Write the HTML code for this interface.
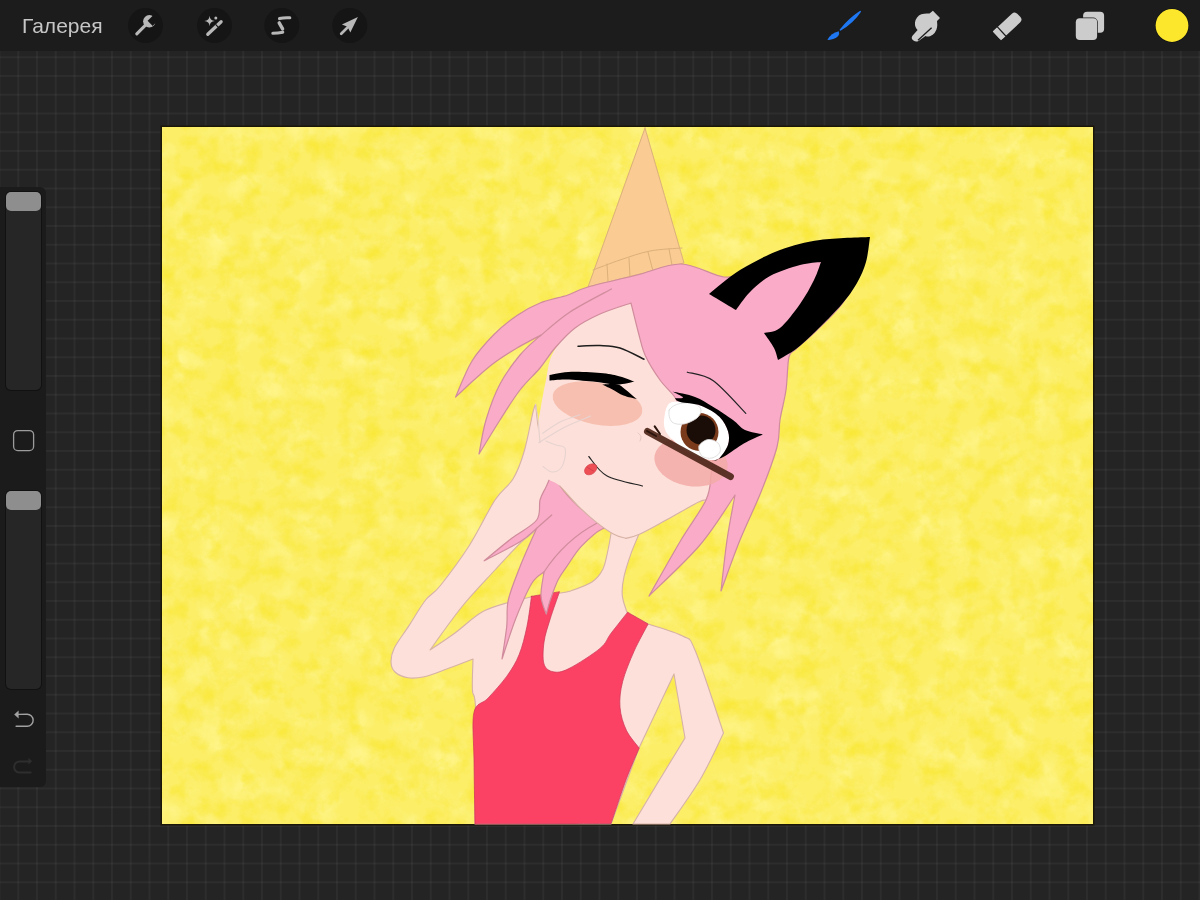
<!DOCTYPE html>
<html><head><meta charset="utf-8">
<style>
html,body{margin:0;padding:0;}
body{width:1200px;height:900px;overflow:hidden;position:relative;background:#242424;font-family:"Liberation Sans",sans-serif;}
#grid{position:absolute;left:0;top:0;width:1200px;height:900px;
background-color:#242424;
background-image:linear-gradient(to right, rgba(255,255,255,0.038) 1.5px, transparent 1.5px),linear-gradient(to bottom, rgba(255,255,255,0.038) 1.5px, transparent 1.5px);
background-size:18.75px 18.75px;background-position:-1.5px 0px;}
#topbar{position:absolute;left:0;top:0;width:1200px;height:51px;background:#1c1c1c;}
#gal{position:absolute;left:22px;top:14px;font-size:21px;color:#c6c6c6;transform:translateZ(0);}
.circ{position:absolute;top:8px;width:36px;height:36px;border-radius:50%;background:#151515;}
#side{position:absolute;left:0;top:187px;width:46px;height:600px;background:#1b1b1b;border-radius:0 6px 6px 0;}
.track{position:absolute;left:6px;width:35px;background:#262626;border-radius:5px;box-shadow:0 0 0 1px #111;}
.thumb{position:absolute;left:6px;width:35px;height:19px;background:#8e8e8e;border-radius:5px;}
svg{position:absolute;left:0;top:0;}
</style></head><body>
<div id="grid"></div>
<div id="topbar"></div>
<div id="gal">Галерея</div>
<div id="side"></div>
<div class="track" style="top:192px;height:198px"></div>
<div class="thumb" style="top:192px"></div>
<div class="track" style="top:491px;height:198px"></div>
<div class="thumb" style="top:491px"></div>
<svg width="1200" height="900" viewBox="0 0 1200 900">
<defs>
<filter id="tex" x="0" y="0" width="100%" height="100%" color-interpolation-filters="sRGB">
<feTurbulence type="fractalNoise" baseFrequency="0.05" numOctaves="5" seed="11" result="n"/>
<feColorMatrix in="n" type="matrix" values="0 0 0 0 0.975  0 0 0 0 0.905  0 0 0 0 0.2  1.9 0 0 0 -0.85" result="c"/>
<feComposite in="c" in2="SourceGraphic" operator="in"/>
</filter>
<filter id="tex2" x="0" y="0" width="100%" height="100%" color-interpolation-filters="sRGB">
<feTurbulence type="fractalNoise" baseFrequency="0.035" numOctaves="4" seed="23" result="n"/>
<feColorMatrix in="n" type="matrix" values="0 0 0 0 1  0 0 0 0 0.97  0 0 0 0 0.6  1.6 0 0 0 -0.72" result="c"/>
<feComposite in="c" in2="SourceGraphic" operator="in"/>
</filter>
</defs>
<rect x="160.5" y="125.5" width="934" height="700" fill="#1a1608"/>
<rect x="162" y="127" width="931" height="697" fill="#fcee66"/>
<rect x="162" y="127" width="931" height="697" fill="#fff" filter="url(#tex2)"/>
<rect x="162" y="127" width="931" height="697" fill="#fff" filter="url(#tex)"/>
<g stroke-linejoin="round" stroke-linecap="round">
<!-- cone -->
<path d="M645.0,128.0 C651.5,150.5 677.5,240.5 684.0,263.0 C668.0,267.0 604.0,283.0 588.0,287.0 C597.5,260.5 635.5,154.5 645.0,128.0 Z" fill="#facb93" stroke="#dcb07a" stroke-width="1"/>
<path d="M593.0,270.0 C597.5,268.3 610.5,263.2 620.0,260.0 C629.5,256.8 639.7,253.0 650.0,251.0 C660.3,249.0 676.7,248.5 682.0,248.0" fill="none" stroke="#dcb07a" stroke-width="1"/>
<path d="M607,264 L608,281 M629,258 L630,277 M648,252 L653,271 M669,249 L672,265" fill="none" stroke="#dcb07a" stroke-width="1"/>
<!-- body skin -->
<path d="M611.6,530.0 C611.0,533.3 609.5,543.4 608.0,550.0 C606.5,556.6 605.4,564.3 602.7,569.6 C600.0,574.9 597.3,578.5 592.0,582.0 C586.7,585.5 576.0,589.1 570.7,590.9 C565.4,592.7 561.8,592.6 560.0,593.0 C555.1,593.7 535.7,596.3 530.8,597.0 C527.3,597.8 518.1,599.5 510.0,602.0 C501.9,604.5 491.2,606.8 482.0,612.0 C472.8,617.2 463.7,626.7 455.0,633.0 C446.3,639.3 434.2,647.2 430.0,650.0 C435.3,642.8 450.9,620.3 461.7,607.0 C472.5,593.7 485.3,580.6 495.0,570.0 C504.7,559.4 513.0,550.2 520.0,543.3 C527.0,536.3 531.7,535.5 536.7,528.3 C541.7,521.1 547.5,508.4 550.0,500.0 C552.5,491.6 552.5,483.0 552.0,478.0 C551.5,473.0 549.0,476.2 547.0,470.0 C545.0,463.8 541.9,451.9 540.0,441.0 C538.1,430.1 536.3,410.5 535.6,404.4 C535.2,405.7 534.9,404.1 533.0,412.0 C531.1,419.9 527.3,440.8 524.0,452.0 C520.7,463.2 517.8,471.0 513.0,479.0 C508.2,487.0 502.3,488.8 495.0,500.0 C487.7,511.2 478.2,531.7 469.0,546.0 C459.8,560.3 447.2,577.0 440.0,586.0 C432.8,595.0 430.8,593.4 425.6,600.0 C420.4,606.6 414.2,617.6 409.0,625.6 C403.8,633.6 397.4,641.7 394.4,647.8 C391.4,653.9 390.9,658.0 391.0,662.0 C391.1,666.0 392.2,669.4 395.0,672.0 C397.8,674.6 403.1,677.0 408.0,677.8 C412.9,678.6 417.9,678.2 424.4,676.7 C430.8,675.2 438.6,672.0 446.7,669.0 C454.8,666.0 468.6,660.7 473.0,659.0 C472.9,664.2 472.0,681.3 472.4,690.0 C472.8,698.7 475.2,688.7 475.6,711.0 C476.0,733.3 475.1,805.2 475.0,824.0 C497.7,824.0 588.3,824.0 611.0,824.0 C615.7,811.3 634.3,760.7 639.0,748.0 C644.8,735.7 668.2,686.3 674.0,674.0 C675.8,684.7 683.2,727.3 685.0,738.0 C680.3,745.7 665.7,769.7 657.0,784.0 C648.3,798.3 637.0,817.3 633.0,824.0 C639.2,824.0 663.8,824.0 670.0,824.0 C675.1,816.5 691.6,794.2 700.5,779.0 C709.4,763.8 719.7,740.7 723.5,733.0 C718.8,719.3 702.2,667.2 695.4,651.0 C688.6,634.8 690.5,640.5 682.6,636.0 C674.7,631.5 653.8,626.0 648.0,624.0 C644.9,622.3 633.0,616.5 629.3,614.0 C625.6,611.5 627.0,612.0 625.8,608.7 C624.6,605.4 622.5,599.7 622.2,594.4 C621.9,589.1 622.5,583.5 624.0,576.7 C625.5,569.9 628.6,560.4 631.0,553.6 C633.4,546.8 636.7,539.7 638.2,535.8 C639.7,531.9 639.7,531.0 640.0,530.0 C635.3,530.0 616.3,530.0 611.6,530.0 Z" fill="#fde0d9" stroke="#d7b2a6" stroke-width="1.1"/>
<!-- red top -->
<path d="M531.5,596.3 C536.2,595.5 554.8,592.5 559.5,591.7 C558.0,596.2 552.8,610.5 550.2,618.9 C547.6,627.3 545.0,634.7 544.0,642.2 C543.0,649.7 542.5,659.1 544.0,664.0 C545.5,668.9 549.1,671.0 553.3,671.8 C557.4,672.6 561.1,672.5 568.9,668.6 C576.7,664.7 593.0,654.3 600.0,648.4 C607.0,642.5 606.5,639.2 611.1,633.2 C615.7,627.2 624.9,615.7 627.6,612.2 C631.0,614.2 644.7,622.0 648.1,624.0 C645.8,628.5 638.4,641.5 634.1,651.1 C629.9,660.7 625.0,672.3 622.6,681.7 C620.2,691.1 619.4,699.2 620.0,707.3 C620.6,715.4 623.2,723.5 626.4,730.3 C629.6,737.1 637.1,745.1 639.2,748.1 C637.1,753.2 631.1,766.2 626.4,778.8 C621.7,791.4 613.6,816.0 611.1,823.5 C588.4,823.6 497.7,823.9 475.0,824.0 C474.8,813.3 474.2,778.6 474.0,760.0 C473.8,741.4 471.7,722.5 474.0,712.2 C476.3,701.9 482.6,704.2 488.0,698.2 C493.4,692.2 501.5,683.6 506.7,676.4 C511.9,669.1 515.7,663.0 519.1,654.7 C522.5,646.4 524.8,636.4 526.9,626.7 C529.0,617.0 530.7,601.4 531.5,596.3 Z" fill="#fc4264" stroke="#cc3556" stroke-width="0.7"/>
<!-- back hair -->
<path d="M554.0,472.0 C551.7,472.2 548.3,482.3 546.0,487.0 C543.7,491.7 541.5,494.5 540.0,500.0 C538.5,505.5 541.4,513.6 536.7,520.0 C532.0,526.4 520.5,531.5 511.7,538.3 C502.9,545.1 488.8,557.0 484.2,560.8 C490.2,557.6 511.2,547.1 520.0,541.7 C528.8,536.3 533.9,530.5 536.7,528.3 C533.9,534.7 524.7,554.8 520.0,566.7 C515.3,578.7 510.5,590.0 508.3,600.0 C506.1,610.0 507.8,616.9 506.7,626.7 C505.6,636.5 502.8,653.6 502.0,659.0 C504.3,652.2 511.0,630.7 516.0,618.0 C521.0,605.3 527.3,590.7 532.0,583.0 C536.7,575.3 542.0,573.8 544.0,572.0 C543.5,576.0 540.6,589.0 541.0,596.0 C541.4,603.0 545.4,611.2 546.3,614.2 C546.9,611.9 548.2,605.9 550.2,600.2 C552.2,594.5 555.2,585.6 558.0,580.0 C560.8,574.4 562.8,572.3 566.7,566.7 C570.6,561.1 575.3,552.7 581.3,546.4 C587.3,540.1 597.2,531.1 602.7,528.7 C608.2,526.3 612.1,531.5 614.0,532.0 C611.7,530.3 606.0,526.3 600.0,522.0 C594.0,517.7 584.7,512.0 578.0,506.0 C571.3,500.0 564.0,491.7 560.0,486.0 C556.0,480.3 556.3,471.8 554.0,472.0 Z" fill="#f9abc8" stroke="#d08c9c" stroke-width="1.2"/>
<path d="M536.7,528.3 L551.7,515 M544,572 Q565,540 596.7,523.3" fill="none" stroke="#d08c9c" stroke-width="1.2"/>
<!-- face skin -->
<path d="M631.0,301.0 C642.5,304.2 676.8,298.5 700.0,320.0 C723.2,341.5 765.5,404.5 770.0,430.0 C774.5,455.5 737.3,461.3 727.0,473.0 C716.7,484.7 712.7,495.2 708.0,500.0 C703.3,504.8 705.6,498.7 698.7,502.0 C691.8,505.3 676.5,514.5 666.7,519.8 C656.9,525.1 646.8,530.9 640.0,534.0 C633.2,537.1 628.2,537.7 625.8,538.4 C623.7,537.7 618.3,536.8 613.3,534.0 C608.3,531.2 601.5,526.3 595.6,521.6 C589.7,516.9 583.7,511.5 577.8,505.6 C571.9,499.7 565.3,490.6 560.0,486.0 C554.7,481.4 549.8,481.0 546.0,478.0 C542.2,475.0 538.7,474.3 537.0,468.0 C535.3,461.7 535.3,450.3 536.0,440.0 C536.7,429.7 539.3,416.0 541.0,406.0 C542.7,396.0 544.2,388.5 546.0,380.0 C547.8,371.5 548.0,363.3 552.0,355.0 C556.0,346.7 562.0,337.2 570.0,330.0 C578.0,322.8 589.8,316.8 600.0,312.0 C610.2,307.2 625.8,302.8 631.0,301.0 Z" fill="#fde0d9" stroke="none"/>
<path d="M560.0,486.0 C563.0,489.3 571.9,499.7 577.8,505.6 C583.7,511.5 589.7,516.9 595.6,521.6 C601.5,526.3 608.3,531.2 613.3,534.0 C618.3,536.8 623.7,537.7 625.8,538.4" fill="none" stroke="#d7b2a6" stroke-width="1.1"/>
<path d="M625.8,538.4 C628.2,537.7 633.2,537.1 640.0,534.0 C646.8,530.9 656.9,525.1 666.7,519.8 C676.5,514.5 691.8,505.3 698.7,502.0 C705.6,498.7 706.5,500.3 708.0,500.0" fill="none" stroke="#d7b2a6" stroke-width="1.1"/>
<!-- main hair -->
<path d="M455.6,397.0 C458.3,391.0 465.6,371.4 472.0,361.0 C478.4,350.6 486.5,342.1 494.0,334.5 C501.5,326.9 509.3,320.8 517.0,315.5 C524.7,310.2 531.5,306.4 540.0,303.0 C548.5,299.6 560.0,297.7 568.0,295.0 C576.0,292.3 576.5,290.3 588.0,287.0 C599.5,283.7 621.5,278.8 637.0,275.0 C652.5,271.2 666.5,263.7 681.0,264.0 C695.5,264.3 713.3,276.0 724.0,277.0 C734.7,278.0 734.0,274.5 745.0,270.0 C756.0,265.5 774.2,254.8 790.0,250.0 C805.8,245.2 827.3,242.7 840.0,241.0 C852.7,239.3 861.7,240.2 866.0,240.0 C865.0,245.3 864.0,261.3 860.0,272.0 C856.0,282.7 849.3,294.2 842.0,304.0 C834.7,313.8 823.7,323.5 816.0,331.0 C808.3,338.5 800.5,344.7 796.0,349.0 C791.5,353.3 790.7,350.2 789.0,357.0 C787.3,363.8 787.5,379.5 786.0,390.0 C784.5,400.5 781.5,410.5 780.0,420.0 C778.5,429.5 780.2,435.0 777.0,447.0 C773.8,459.0 767.2,476.5 761.0,492.0 C754.8,507.5 746.7,523.5 740.0,540.0 C733.3,556.5 724.2,582.5 721.0,591.0 C722.0,582.5 724.7,556.0 727.0,540.0 C729.3,524.0 733.7,502.5 735.0,495.0 C729.2,503.3 714.3,528.2 700.0,545.0 C685.7,561.8 657.5,587.5 649.0,596.0 C654.3,586.7 671.5,556.0 681.0,540.0 C690.5,524.0 701.0,510.8 706.0,500.0 C711.0,489.2 710.0,482.5 711.0,475.0 C712.0,467.5 713.8,462.2 712.0,455.0 C710.2,447.8 705.0,439.5 700.0,432.0 C695.0,424.5 686.3,416.0 682.0,410.0 C677.7,404.0 677.7,401.0 674.0,396.0 C670.3,391.0 664.8,386.7 660.0,380.0 C655.2,373.3 649.0,363.5 645.5,356.0 C642.0,348.5 641.4,343.8 639.0,335.0 C636.6,326.2 632.3,308.3 631.0,303.0 C625.8,304.8 609.3,309.8 600.0,314.0 C590.7,318.2 582.5,322.3 575.0,328.0 C567.5,333.7 560.8,341.3 555.0,348.0 C549.2,354.7 545.8,361.0 540.0,368.0 C534.2,375.0 526.7,381.3 520.0,390.0 C513.3,398.7 506.8,409.3 500.0,420.0 C493.2,430.7 482.5,448.3 479.0,454.0 C480.2,448.3 482.5,431.7 486.0,420.0 C489.5,408.3 494.3,394.8 500.0,384.0 C505.7,373.2 513.2,363.2 520.0,355.0 C526.8,346.8 537.5,338.3 541.0,335.0 C537.0,337.2 524.8,343.3 517.0,348.0 C509.2,352.7 501.2,357.7 494.0,363.0 C486.8,368.3 480.4,374.3 474.0,380.0 C467.6,385.7 458.7,394.2 455.6,397.0 Z" fill="#f9abc8" stroke="#d08c9c" stroke-width="1.2"/>
<path d="M540.0,336.0 C545.0,332.0 558.1,319.8 570.0,312.0 C581.9,304.2 604.6,292.8 611.5,289.0" fill="none" stroke="#d08c9c" stroke-width="1.2"/>
<!-- ear -->
<path d="M709.0,294.0 C714.2,290.0 728.2,277.3 740.0,270.0 C751.8,262.7 766.7,255.0 780.0,250.0 C793.3,245.0 805.0,242.2 820.0,240.0 C835.0,237.8 861.7,237.5 870.0,237.0 C869.3,241.2 868.2,254.3 866.0,262.0 C863.8,269.7 861.0,276.0 857.0,283.0 C853.0,290.0 848.8,296.0 842.0,304.0 C835.2,312.0 823.7,323.5 816.0,331.0 C808.3,338.5 802.3,344.2 796.0,349.0 C789.7,353.8 781.0,358.2 778.0,360.0 C777.3,358.0 776.3,352.5 774.0,348.0 C771.7,343.5 765.7,335.5 764.0,333.0 C766.7,332.2 774.0,332.8 780.0,328.0 C786.0,323.2 794.3,312.0 800.0,304.0 C805.7,296.0 810.5,287.0 814.0,280.0 C817.5,273.0 819.8,265.0 821.0,262.0 C817.5,262.5 808.5,262.7 800.0,265.0 C791.5,267.3 778.3,271.5 770.0,276.0 C761.7,280.5 755.7,286.3 750.0,292.0 C744.3,297.7 738.3,307.0 736.0,310.0 C731.5,307.3 713.5,296.7 709.0,294.0 Z" fill="#000"/>
<!-- left blush -->
<ellipse cx="597.5" cy="403.6" rx="45.5" ry="21" transform="rotate(11 597.5 403.6)" fill="#f7bfaf"/>
<!-- right blush -->
<ellipse cx="691" cy="462" rx="37" ry="24" transform="rotate(10 691 462)" fill="#f2aaa6" opacity="0.85"/>
<!-- wink -->
<path d="M549.5,375.0 C553.2,374.5 562.7,372.1 571.7,371.8 C580.7,371.5 595.2,372.4 603.3,373.2 C611.3,374.0 614.8,375.1 620.0,376.5 C625.2,377.9 632.1,380.8 634.5,381.6 C631.6,382.1 624.0,384.6 617.0,384.6 C610.0,384.6 601.2,382.5 592.8,381.6 C584.4,380.8 573.6,379.7 566.4,379.5 C559.2,379.3 552.3,380.4 549.5,380.6 C549.5,379.7 549.5,375.9 549.5,375.0 Z" fill="#000"/>
<path d="M602.0,384.4 C604.5,384.4 613.2,383.4 617.0,384.2 C620.8,385.0 621.7,386.7 625.0,389.2 C628.3,391.7 634.8,397.4 636.8,399.0 C634.6,398.4 627.6,397.1 623.5,395.5 C619.4,393.9 615.6,391.1 612.0,389.2 C608.4,387.3 603.7,385.2 602.0,384.4 Z" fill="#000"/>
<path d="M578.0,346.2 C581.7,346.1 593.0,345.3 600.0,345.6 C607.0,345.9 612.7,345.7 620.0,348.0 C627.3,350.3 640.0,357.3 644.0,359.2" fill="none" stroke="#1e1e1e" stroke-width="1.5"/>
<!-- open eye -->
<path d="M672.0,402.0 C678.1,400.2 693.1,403.2 701.0,405.7 C708.9,408.1 714.9,412.4 719.4,416.7 C723.9,421.0 726.6,426.6 728.0,431.3 C729.4,436.0 729.4,440.3 728.0,444.8 C726.6,449.3 722.9,455.8 719.4,458.2 C715.9,460.6 711.9,460.2 707.2,459.4 C702.5,458.6 696.4,455.9 691.3,453.3 C686.2,450.7 681.0,447.2 676.7,443.5 C672.4,439.8 667.8,435.8 665.7,431.3 C663.7,426.8 663.4,421.6 664.4,416.7 C665.4,411.8 665.9,403.8 672.0,402.0 Z" fill="#fff"/>
<circle cx="699.5" cy="432" r="19" fill="#7a3b1c"/>
<circle cx="701" cy="430" r="14.5" fill="#1a0c06"/>
<path d="M669.3,410.0 C670.6,406.9 675.7,404.5 680.0,403.5 C684.3,402.5 691.5,402.9 695.0,404.0 C698.5,405.1 700.7,407.7 701.0,410.0 C701.3,412.3 699.8,415.7 697.0,418.0 C694.2,420.3 688.2,423.3 684.0,424.0 C679.8,424.7 674.5,424.3 672.0,422.0 C669.5,419.7 668.0,413.1 669.3,410.0 Z" fill="#fff" stroke="#d8d8d8" stroke-width="0.8"/>
<path d="M699.0,446.0 C700.0,443.2 704.8,440.0 708.0,439.5 C711.2,439.0 716.0,440.9 718.0,443.0 C720.0,445.1 721.0,449.5 720.0,452.0 C719.0,454.5 715.0,457.3 712.0,458.0 C709.0,458.7 704.2,458.0 702.0,456.0 C699.8,454.0 698.0,448.8 699.0,446.0 Z" fill="#fff" stroke="#d8d8d8" stroke-width="0.8"/>
<path d="M672.4,391.6 C676.2,392.5 688.2,394.4 695.0,397.0 C701.8,399.6 707.0,403.2 713.3,407.0 C719.6,410.8 727.7,416.2 733.0,420.0 C738.3,423.8 740.0,427.6 745.0,430.0 C750.0,432.4 759.8,433.7 762.8,434.4 C759.6,435.9 750.0,439.9 743.8,443.5 C737.6,447.1 730.6,452.8 725.5,455.7 C720.4,458.6 715.1,460.1 713.0,461.0 C714.1,460.5 716.9,460.9 719.4,458.2 C721.9,455.5 726.6,449.3 728.0,444.8 C729.4,440.3 729.4,436.0 728.0,431.3 C726.6,426.6 723.9,421.0 719.4,416.7 C714.9,412.4 707.5,408.1 701.0,405.7 C694.5,403.2 684.7,403.2 680.3,402.0 C675.9,400.8 675.7,398.9 674.8,398.3 C676.2,398.2 683.4,398.6 683.0,397.5 C682.6,396.4 674.2,392.6 672.4,391.6 Z" fill="#000"/>
<path d="M647.5,431.5 L730.4,476.5" fill="none" stroke="#4e2619" stroke-width="7" opacity="0.92"/>
<path d="M647,431 L656,436 M654.7,426.4 L660,434" fill="none" stroke="#2a140c" stroke-width="2"/>
<path d="M687.3,372.2 C691.6,373.6 703.5,373.9 713.3,380.8 C723.0,387.7 740.4,408.0 745.8,413.4" fill="none" stroke="#222" stroke-width="1.2"/>
<!-- mouth -->
<path d="M588.8,456.5 C591.8,459.7 597.8,470.8 606.7,475.7 C615.7,480.6 636.5,484.3 642.5,486.0" fill="none" stroke="#222" stroke-width="1.1"/>
<ellipse cx="590.7" cy="469.3" rx="6.8" ry="4.8" transform="rotate(-35 590.7 469.3)" fill="#ee4f55" stroke="#d33c48" stroke-width="0.6"/>
<path d="M538.7,442.7 C543.1,440.1 556.3,431.4 565.0,427.0 C573.7,422.6 586.4,417.8 590.7,416.0" fill="none" stroke="#e6d3d0" stroke-width="1.1"/>
<path d="M542.7,433.3 C545.6,431.4 553.8,425.1 560.0,422.0 C566.2,418.9 576.7,415.9 580.0,414.7" fill="none" stroke="#e6d3d0" stroke-width="1.1"/>
<path d="M546.0,441.0 C547.7,441.7 552.9,443.9 556.0,445.0 C559.1,446.1 563.0,445.5 564.5,447.5 C566.0,449.5 565.6,453.6 565.0,457.0 C564.4,460.4 563.2,465.5 561.0,468.0 C558.8,470.5 555.0,472.2 552.0,472.0 C549.0,471.8 544.5,467.4 543.0,466.5" fill="none" stroke="#e6d3d0" stroke-width="1.1"/>
<path d="M535.6,404.4 C536.0,407.0 537.3,413.6 538.0,420.0 C538.7,426.4 539.7,438.9 540.0,442.7" fill="none" stroke="#e3cfca" stroke-width="1"/>
<path d="M638.0,433.0 C638.5,433.6 640.7,435.2 641.0,436.5 C641.3,437.8 640.2,440.2 640.0,441.0" fill="none" stroke="#e3c8c0" stroke-width="1"/>
<path d="M587.5,467.5 L593.5,471" fill="none" stroke="#c73848" stroke-width="0.7"/>
<!-- end -->
</g>
</svg>
<svg id="ui" width="1200" height="900" viewBox="0 0 1200 900" style="position:absolute;left:0;top:0">
<g fill="#151515">
<circle cx="145.5" cy="25.5" r="17.5"/><circle cx="214.5" cy="25.5" r="17.5"/><circle cx="281.8" cy="25.5" r="17.5"/><circle cx="349.8" cy="25.5" r="17.5"/>
</g>
<g fill="#b8b8b8" stroke="none">
<!-- wrench -->
<path d="M136.8,33.9 L146,24.7" stroke="#b8b8b8" stroke-width="3.1" stroke-linecap="round" fill="none"/>
<mask id="wm"><rect x="130" y="5" width="30" height="30" fill="#fff"/><path d="M147.6,20.8 L153.5,14.9 L158.6,20 L152.7,25.9 Z" fill="#000"/></mask>
<circle cx="149.3" cy="21.3" r="6.2" mask="url(#wm)"/>
<!-- wand -->
<path d="M207.8,34.3 L221.1,21.7" stroke="#b8b8b8" stroke-width="3.3" stroke-linecap="round" fill="none"/>
<path d="M215.6,24.4 L218.4,27.4" stroke="#151515" stroke-width="1.1" fill="none"/>
<path d="M209.6,15.8 Q209.9,20.7 214.8,21 Q209.9,21.3 209.6,26.2 Q209.3,21.3 204.4,21 Q209.3,20.7 209.6,15.8 Z"/>
<circle cx="215.8" cy="17.9" r="1.5"/>
<!-- selection S -->
<path d="M279.5,18.6 Q284,17.4 289.8,17.8" stroke="#b8b8b8" stroke-width="3.1" stroke-linecap="round" fill="none"/>
<path d="M279.2,22.9 L282.6,28.9" stroke="#b8b8b8" stroke-width="3.4" stroke-linecap="round" fill="none"/>
<path d="M272.8,33.3 Q278,33.3 282.8,32.2" stroke="#b8b8b8" stroke-width="3" stroke-linecap="round" fill="none"/>
<!-- arrow -->
<path d="M341.2,33.7 L350,25" stroke="#b8b8b8" stroke-width="2.7" stroke-linecap="round" fill="none"/>
<path d="M357.9,17 L341.9,24.6 L347.5,26.8 L350.3,32.6 Z"/>
</g>
<!-- brush -->
<path d="M840.4,29.9 Q849,19 860.2,11.6 Q853,22.5 840.4,29.9 Z" fill="#1f78f2" stroke="#1f78f2" stroke-width="1.6" stroke-linejoin="round"/>
<path d="M827.4,39.8 Q831,33 838.8,31.2 Q840.5,36 834,38.8 Q830.5,40.2 827.4,39.8 Z" fill="#1f78f2"/>
<!-- smudge -->
<path d="M913.5,40.6 Q910.5,38.5 912.5,35.8 L917.6,30 Q914.6,27 915,22.5 Q916,16.5 921.3,14.3 Q925.5,13 929.5,13.6 L932.9,10.8 L940,17.9 L937,21 Q937.5,25 937,27.5 Q936,33.5 930,36.3 Q927.5,37 925.5,36 L918.5,41 Q915.8,42.2 913.5,40.6 Z" fill="#cccccc"/>
<path d="M918,40.3 L931.6,27.7" stroke="#1c1c1c" stroke-width="1.3" fill="none"/>
<!-- eraser -->
<g transform="translate(1007.9,25.6) rotate(-43)">
<path d="M-15,-6 L11,-6 Q15,-6 15,-2 L15,2 Q15,6 11,6 L-15,6 Q-15,6 -15,6 Z" fill="#cccccc"/>
<path d="M-15,-6 L-15,3 Q-15,6 -12,6 L-9,6 L-9,-6 Z" fill="#cccccc"/>
<path d="M-8.6,-6.5 L-8.6,6.5" stroke="#1c1c1c" stroke-width="1.2"/>
</g>
<!-- layers -->
<rect x="1083.1" y="11.7" width="21" height="21" rx="4" fill="#cccccc"/>
<rect x="1075" y="17.5" width="22.8" height="23.4" rx="4.8" fill="#1c1c1c"/>
<rect x="1075.8" y="18.3" width="21.3" height="21.8" rx="4" fill="#cccccc"/>
<!-- color -->
<circle cx="1172" cy="25.5" r="17" fill="#111"/>
<circle cx="1172" cy="25.5" r="16.4" fill="#fce72c"/>
<!-- side square -->
<rect x="13.6" y="430.6" width="20" height="20" rx="4.2" fill="none" stroke="#9c9c9c" stroke-width="1.3"/>
<!-- undo -->
<path d="M18.3,714.4 L27.2,714.3 A5.9,5.9 0 0 1 27.2,726.2 L16.1,726.2" fill="none" stroke="#a2a2a2" stroke-width="1.4" stroke-linecap="round"/>
<path d="M14.2,714.5 L18.6,710.4 L18.6,718.5 Z" fill="#a2a2a2"/>
<!-- redo -->
<path d="M29.9,761.4 L19.7,761.4 A5.6,5.6 0 0 0 19.7,772.6 L30.8,772.6" fill="none" stroke="#2e2e2e" stroke-width="2" stroke-linecap="round"/>
<path d="M32.2,761.2 L28.4,757.8 L28.4,764.6 Z" fill="#2e2e2e"/>
</svg>
</body></html>
